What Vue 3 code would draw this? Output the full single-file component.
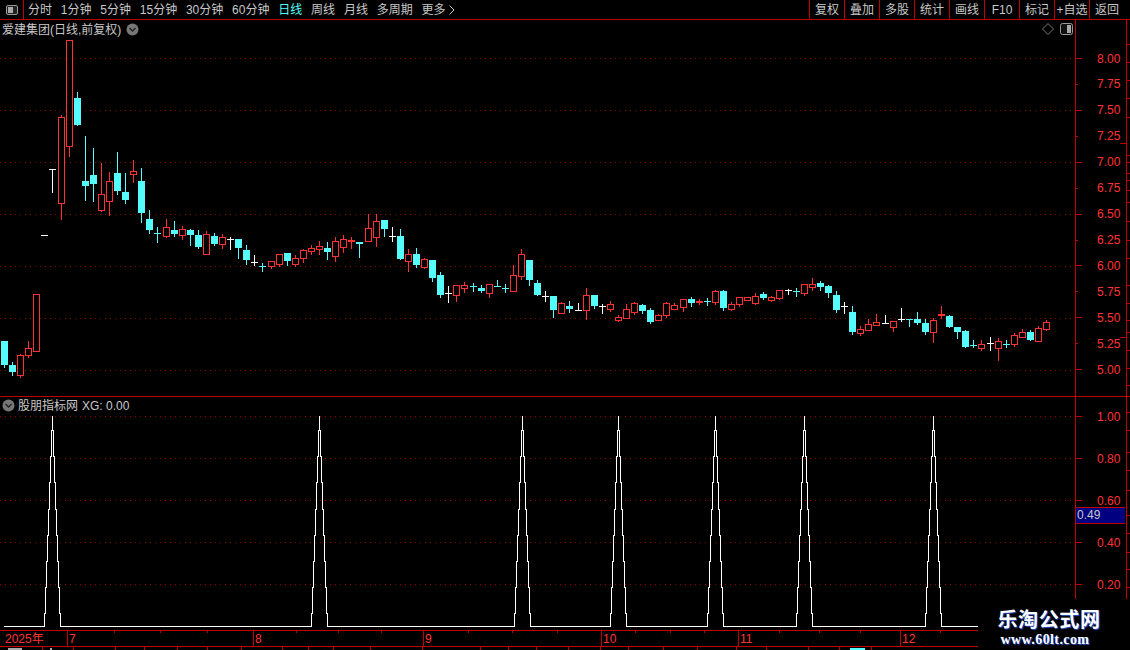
<script setup>
const menu = ['分时','1分钟','5分钟','15分钟','30分钟','60分钟','日线','周线','月线','多周期']
const tools = ['复权','叠加','多股','统计','画线','F10','标记','+自选','返回']

// type, high, bodyTop, bodyBottom, low
const raw = [
['c',341,341,365,367],['c',362,365,372,375],['r',354,355,375,377],['r',341,348,355,357],['r',294,294,351,351],
['w',235,235,235,235],['w',169,169,169,192],['r',115,117,203,219],['r',40,40,146,156],['c',92,98,125,125],
['c',136,181,186,200],['c',148,175,184,201],['r',163,194,210,211],['r',172,181,201,215],['c',152,173,191,194],
['c',173,192,200,203],['r',160,171,174,182],['c',168,181,213,222],['c',210,219,230,233],['c',227,233,233,242],
['r',219,227,236,237],['c',221,230,234,236],['r',226,229,235,239],['c',229,230,235,245],['c',230,235,247,248],
['r',231,234,254,254],['c',233,236,244,245],['r',234,237,244,248],['w',237,239,239,249],['c',239,239,248,258],
['c',245,250,260,264],['w',255,262,262,265],['c',263,266,266,271],['r',261,261,266,268],['r',254,254,264,266],
['c',253,253,261,265],['r',255,258,264,266],['r',249,250,258,262],['r',245,248,251,254],['r',241,246,249,254],
['c',242,248,252,259],['r',237,241,256,261],['r',235,239,247,252],['r',237,240,242,248],['c',242,242,244,257],
['r',214,228,241,241],['r',214,221,237,246],['c',220,220,229,236],['w',227,236,236,241],['c',229,236,259,259],
['r',249,254,261,271],['c',248,254,265,267],['r',258,259,267,268],['c',260,260,278,281],['c',272,275,295,297],
['w',286,293,293,302],['r',285,285,295,301],['r',282,285,288,292],['c',283,286,286,291],['c',285,288,291,292],
['r',284,284,293,297],['c',280,286,286,286],['c',284,288,288,292],['r',265,275,291,291],['r',249,254,276,279],
['c',260,260,280,285],['c',280,283,295,295],['w',291,296,296,301],['c',296,296,310,317],['r',302,303,313,313],
['c',301,306,309,312],['w',303,310,310,310],['r',288,295,310,319],['c',295,295,306,308],['w',304,306,306,313],
['r',301,304,309,311],['r',315,317,320,321],['r',304,309,318,318],['r',302,303,312,314],['c',304,305,311,313],
['c',308,310,322,323],['r',314,315,320,320],['r',302,303,315,317],['r',303,305,309,309],['r',299,299,307,311],
['c',297,299,303,306],['r',299,301,303,304],['c',298,301,301,305],['r',290,291,302,304],['c',290,291,308,310],
['r',302,304,309,310],['r',297,297,304,306],['r',297,297,300,300],['r',293,296,303,304],['c',292,294,298,299],
['r',296,297,300,301],['r',290,290,298,299],['w',289,290,290,294],['c',288,291,291,296],['r',284,284,293,295],
['r',278,284,287,290],['c',281,283,287,290],['c',285,286,293,297],['c',291,295,310,312],['w',302,306,306,313],
['c',306,312,332,334],['r',326,329,333,335],['r',319,324,330,330],['r',314,322,325,325],['w',315,323,323,323],
['r',321,321,327,331],['w',308,319,319,321],['c',319,319,319,326],['c',312,319,323,324],['c',319,323,332,334],
['r',318,320,332,342],['r',306,314,316,318],['c',315,316,327,327],['c',327,327,332,338],['c',330,331,347,347],
['c',340,345,345,347],['r',340,344,348,350],['w',337,343,343,350],['r',338,341,348,360],['c',340,344,344,347],
['r',333,335,344,346],['r',329,332,337,337],['c',330,332,340,340],['r',326,328,341,341],['r',320,322,329,330]
]
const colors = { r: '#ff3232', c: '#54fcfc', w: '#ffffff' }
const candles = raw.map((d, i) => ({
  x: Math.round(4 + 8.078 * i),
  color: colors[d[0]],
  type: d[0],
  high: d[1], top: d[2], bottom: d[3], low: d[4]
}))

const range = (a, n, s) => Array.from({ length: n }, (_, i) => a + i * s)
const priceGrid = range(58, 7, 52)
const priceLabels = ['8.00','7.75','7.50','7.25','7.00','6.75','6.50','6.25','6.00','5.75','5.50','5.25','5.00']
  .map((t, i) => ({ t, y: 58 + i * 25.93 }))
const priceEdge = [44,62,80,98,117,155,162,173,180,190,202,221,240,258,285,303,320,332,350,368,385]
const lowerEdge = [412,430,452,470,490,515,533,552,569,587]
const lowerLabels = [['1.00',416],['0.80',458],['0.60',500],['0.40',542],['0.20',584]]

const ys = [626, 613, 587, 561, 535, 509, 482, 456, 430]
const peaks = [52, 319, 522, 618, 715, 804, 933]
let line = 'M4 626.5'
for (const c of peaks) {
  for (let i = 1; i < ys.length; i++) line += ` H${c - 9 + i + 0.5} V${ys[i]}`
  line += ` H${c + 0.5} V416 V430`
  for (let i = 1; i < ys.length; i++) line += ` H${c + i + 0.5} V${ys[ys.length - 1 - i]}`
  line += ' V626.5'
}
line += ' H978'

const months = [['7',67],['8',253],['9',423],['10',601],['11',738],['12',900]]
const topTicks = [114,160,207,296,338,381,468,512,557,635,670,704,779,819,860,940]
const bottomTicks = [42,73,115,144,177,207,241,282,308,333,370,422,480,508,536,568,600,628,663,697,736,766,808,839,871]
</script>

<template>
  <div class="screen">
    <header class="top">
      <div class="side">
        <svg width="14" height="12" viewBox="0 0 14 12"><rect x="1.5" y="1.5" width="11" height="9" rx="1.5" fill="#222" stroke="#999"/><rect x="3" y="3" width="5" height="6" fill="#aaa"/></svg>
      </div>
      <nav class="menu">
        <span v-for="m in menu" :key="m" :class="{ on: m === '日线' }">{{ m }}</span>
        <span class="more">更多 <svg width="6" height="10" viewBox="0 0 6 10"><path d="M.5.5 5 5 .5 9.5" fill="none" stroke="#c8c8c8"/></svg></span>
      </nav>
      <div class="tools"><span v-for="t in tools" :key="t" class="tool">{{ t }}</span></div>
    </header>

    <section class="price">
      <svg class="chart" width="1130" height="376" viewBox="0 20 1130 376">
        <g shape-rendering="crispEdges">
          <line v-for="y in priceGrid" :key="y" x1="0" x2="1075" :y1="y + .5" :y2="y + .5" class="dots" />
          <rect x="1075" y="20" width="1" height="376" fill="#c00000" />
          <rect x="1126" y="20" width="1" height="376" fill="#c00000" />
          <rect v-for="(l, i) in priceLabels" :key="l.t" x="1076" :y="Math.round(l.y)" :width="i % 2 ? 2 : 6" height="1" fill="#c00000" />
          <rect v-for="y in priceEdge" :key="y" x="1127" :y="y" width="3" height="1" fill="#c00000" />
          <rect x="1120" y="143" width="6" height="1" fill="#c00000" />
          <rect x="1120" y="337" width="6" height="1" fill="#c00000" />
          <g v-for="(c, i) in candles" :key="i">
            <rect v-if="c.low > c.high" :x="c.x" :y="c.high" width="1" :height="c.low - c.high + 1" :fill="c.color" />
            <rect v-if="c.type === 'r' && c.bottom - c.top > 2" :x="c.x - 2.5" :y="c.top + .5" width="6" :height="c.bottom - c.top" fill="#000" :stroke="c.color" />
            <rect v-else :x="c.x - 3" :y="c.top" width="7" :height="Math.max(c.bottom - c.top, 1)" :fill="c.color" />
          </g>
        </g>
        <text v-for="l in priceLabels" :key="l.t" x="1097" :y="l.y + 4.5" class="axis">{{ l.t }}</text>
      </svg>
      <div class="title">
        <span>爱建集团(日线,前复权)</span>
        <svg width="13" height="13" viewBox="0 0 13 13"><circle cx="6.5" cy="6.5" r="6" fill="#777"/><path d="M3.5 5 6.5 8 9.5 5" fill="none" stroke="#222" stroke-width="1.4"/></svg>
      </div>
      <div class="corner">
        <svg width="12" height="12" viewBox="0 0 12 12"><path d="M6 .5 11.5 6 6 11.5 .5 6Z" fill="none" stroke="#777"/></svg>
        <svg width="13" height="12" viewBox="0 0 13 12"><rect x=".5" y=".5" width="12" height="11" rx="2" fill="#111" stroke="#999"/><rect x="7" y="2" width="4" height="8" fill="#aaa"/></svg>
      </div>
    </section>

    <section class="lower">
      <svg class="chart" width="1130" height="233" viewBox="0 397 1130 233">
        <g shape-rendering="crispEdges">
          <line v-for="l in lowerLabels" :key="l[0]" x1="0" x2="1075" :y1="l[1] + .5" :y2="l[1] + .5" class="dots" />
          <rect x="1075" y="397" width="1" height="233" fill="#c00000" />
          <rect x="1126" y="397" width="1" height="233" fill="#c00000" />
          <rect v-for="l in lowerLabels" :key="l[0]" x="1076" :y="l[1]" width="6" height="1" fill="#c00000" />
          <rect v-for="y in lowerEdge" :key="y" x="1127" :y="y" width="3" height="1" fill="#c00000" />
          <path :d="line" fill="none" stroke="#fff" />
        </g>
        <text v-for="l in lowerLabels" :key="l[0]" x="1097" :y="l[1] + 5" class="axis">{{ l[0] }}</text>
      </svg>
      <div class="title sub">
        <svg width="13" height="13" viewBox="0 0 13 13"><circle cx="6.5" cy="6.5" r="6" fill="#777"/><path d="M3.5 5 6.5 8 9.5 5" fill="none" stroke="#222" stroke-width="1.4"/></svg>
        <span>股朋指标网</span>
        <span class="xg">XG: 0.00</span>
      </div>
      <div class="cursor">0.49</div>
    </section>

    <footer class="time">
      <svg width="1130" height="20" viewBox="0 630 1130 20">
        <g shape-rendering="crispEdges" fill="#c00000">
          <rect x="0" y="630" width="1130" height="1" />
          <rect x="0" y="646" width="1130" height="1" />
          <rect v-for="t in topTicks" :key="t" :x="t" y="631" width="1" height="2" />
          <rect v-for="t in bottomTicks" :key="t" :x="t" y="647" width="1" height="3" />
          <rect v-for="m in months" :key="m[0]" :x="m[1]" y="631" width="1" height="15" />
          <rect x="8" y="648" width="14" height="2" fill="#aaa" />
          <rect x="50" y="648" width="2" height="2" fill="#aaa" />
          <rect x="850" y="648" width="15" height="2" fill="#54fcfc" />
        </g>
        <text x="5" y="643" class="axis">2025年</text>
        <text v-for="m in months" :key="m[0]" :x="m[1] + 2" y="643" class="axis">{{ m[0] }}</text>
      </svg>
    </footer>

    <aside class="mark">
      <div class="mark-cn">乐淘公式网</div>
      <div class="mark-en">www.60lt.com</div>
    </aside>
  </div>
</template>

<style>
html, body { margin: 0; background: #000; }
</style>

<style scoped>
.screen {
  position: relative;
  width: 1130px;
  height: 650px;
  overflow: hidden;
  background: #000;
  color: #c8c8c8;
  font: 12px/1 "Liberation Sans", "Noto Sans CJK SC", sans-serif;
  display: flex;
  flex-direction: column;
}
.top {
  height: 20px;
  box-sizing: border-box;
  border-bottom: 1px solid #c00000;
  display: flex;
  align-items: center;
}
.side {
  width: 24px;
  height: 19px;
  box-sizing: border-box;
  border-right: 1px solid #c00000;
  display: flex;
  align-items: center;
  justify-content: center;
}
.menu {
  display: flex;
  gap: 8.8px;
  padding-left: 4px;
  flex: 1;
  align-items: center;
}
.menu .on { color: #54fcfc; }
.more { display: flex; align-items: center; gap: 3px; }
.tools { display: flex; height: 19px; }
.tool {
  width: 35px;
  box-sizing: border-box;
  border-left: 1px solid #c00000;
  display: flex;
  align-items: center;
  justify-content: center;
}
.tool:last-child { width: 41px; padding-right: 6px; }
.price {
  position: relative;
  height: 377px;
  box-sizing: border-box;
  border-bottom: 1px solid #c00000;
}
.lower { position: relative; height: 233px; }
.chart { display: block; }
.dots {
  stroke: #8c0000;
  stroke-width: 1;
  stroke-dasharray: 1 4;
}
.axis {
  fill: #ff3232;
  font: 12px "Liberation Sans", "Noto Sans CJK SC", sans-serif;
}
.title {
  position: absolute;
  left: 2px;
  top: 3px;
  display: flex;
  align-items: center;
  gap: 5px;
  height: 13px;
}
.sub { top: 2px; gap: 3px; }
.xg { margin-left: 1px; }
.corner {
  position: absolute;
  left: 1042px;
  top: 3px;
  display: flex;
  gap: 6px;
}
.cursor {
  position: absolute;
  left: 1076px;
  top: 110px;
  width: 49px;
  height: 17px;
  box-sizing: border-box;
  border-top: 1px solid #c00000;
  border-bottom: 1px solid #c00000;
  background: #000080;
  color: #c8c8c8;
  padding-left: 1px;
  line-height: 15px;
}
.time { height: 20px; }
.time svg { display: block; }
.mark {
  position: absolute;
  left: 978px;
  top: 599px;
  width: 152px;
  height: 51px;
  background: #000;
  color: #fff;
  text-align: center;
  box-sizing: border-box;
  padding-right: 10px;
}
.mark-cn {
  font: 700 20px/22px "Noto Sans CJK SC", sans-serif;
  margin-top: 9px;
  letter-spacing: .6px;
  text-shadow: 1px 1px 1px #2a50c8;
}
.mark-en {
  font: 700 14px/15px "Liberation Serif", serif;
  margin-top: 2px;
  margin-right: 8px;
  letter-spacing: .4px;
  text-shadow: 1px 1px 1px #2a50c8;
}
</style>
